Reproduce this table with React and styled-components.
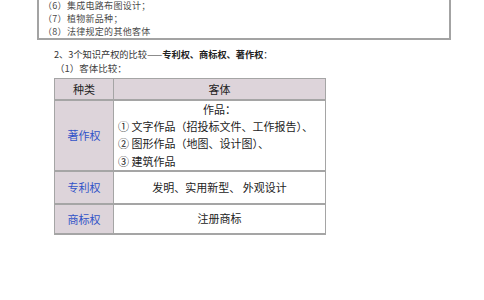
import React from 'react';
import styled, { createGlobalStyle } from 'styled-components';

const GlobalStyle = createGlobalStyle`
  html, body {
    margin: 0;
    padding: 0;
    background: #fff;
  }
  body {
    font-family: "Noto Sans CJK SC", "Liberation Sans", sans-serif;
  }
`;

const Page = styled.div`
  width: 484px;
  height: 300px;
  overflow: hidden;
  background: #fff;
`;

const ListBox = styled.div`
  margin: -1px 0 0 37px;
  width: 406px;
  border: 2px solid #a3a3a3;
  border-top: none;
  padding: 0 0 0 4px;
`;

const ListLine = styled.div`
  font-size: 9px;
  line-height: 13px;
  color: #4a4a4a;
  letter-spacing: 0.3px;
`;

const Heading = styled.div`
  margin: 7px 0 0 54px;
  font-size: 9.2px;
  line-height: 14px;
  color: #333;
`;

const Strong = styled.b`
  font-weight: 700;
  color: #222;
`;

const SubHeading = styled.div`
  margin-left: 55px;
  font-size: 9.5px;
  line-height: 14px;
  color: #444;
`;

const Table = styled.table`
  margin: 3px 0 0 54px;
  width: 272px;
  border-collapse: collapse;
  table-layout: fixed;
  color: #222;
`;

const HeadCell = styled.th`
  width: ${({ $w }) => ($w ? `${$w}px` : 'auto')};
  background: #ddd4da;
  border: 1px solid #a5a5a5;
  border-bottom-width: 2px;
  height: 20px;
  padding: 0;
  font-size: 11px;
  font-weight: 400;
  text-align: center;
`;

const KindCell = styled.td`
  background: #ddd4da;
  border: 1px solid #a5a5a5;
  border-bottom-width: 2px;
  padding: 0;
  height: ${({ $h }) => $h}px;
  font-size: 11px;
  color: #3153c8;
  text-align: center;
`;

const ObjectCell = styled.td`
  border: 1px solid #a5a5a5;
  border-bottom-width: 2px;
  padding: 0 4px;
  font-size: 11px;
  white-space: nowrap;
  text-align: ${({ $left }) => ($left ? 'left' : 'center')};
  line-height: 17.2px;
`;

const Center = styled.div`
  text-align: center;
`;

export default function App() {
  return (
    <Page>
      <GlobalStyle />
      <ListBox>
        <ListLine>（6）集成电路布图设计；</ListLine>
        <ListLine>（7）植物新品种；</ListLine>
        <ListLine>（8）法律规定的其他客体</ListLine>
      </ListBox>
      <Heading>
        2、3个知识产权的比较——<Strong>专利权、商标权、著作权</Strong>：
      </Heading>
      <SubHeading>（1）客体比较：</SubHeading>
      <Table>
        <thead>
          <tr>
            <HeadCell $w={58}>种类</HeadCell>
            <HeadCell>客体</HeadCell>
          </tr>
        </thead>
        <tbody>
          <tr>
            <KindCell $h={66}>著作权</KindCell>
            <ObjectCell $left>
              <Center>作品：</Center>
              <div>①&nbsp;文字作品（招投标文件、工作报告）、</div>
              <div>②&nbsp;图形作品（地图、设计图）、</div>
              <div>③&nbsp;建筑作品</div>
            </ObjectCell>
          </tr>
          <tr>
            <KindCell $h={31}>专利权</KindCell>
            <ObjectCell>发明、实用新型、 外观设计</ObjectCell>
          </tr>
          <tr>
            <KindCell $h={28}>商标权</KindCell>
            <ObjectCell>注册商标</ObjectCell>
          </tr>
        </tbody>
      </Table>
    </Page>
  );
}
